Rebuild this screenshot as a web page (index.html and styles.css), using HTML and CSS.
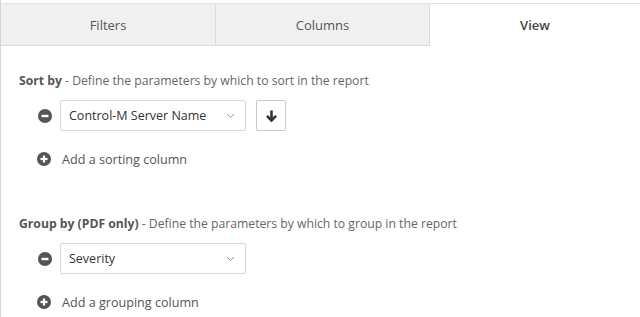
FILE: index.html
```html
<!DOCTYPE html>
<html>
<head>
<meta charset="utf-8">
<link rel="stylesheet" href="styles.css">
</head>
<body>
<div class="panel">
  <div class="tabs">
    <div class="tab">Filters</div>
    <div class="tab">Columns</div>
    <div class="tab active">View</div>
  </div>
  <div class="content">
    <section class="section">
      <p class="heading"><b>Sort by</b> - Define the parameters by which to sort in the report</p>
      <div class="row">
        <span class="circle-icon">
          <svg width="14" height="14" viewBox="0 0 14 14"><circle cx="7" cy="7" r="7" fill="#555"/><rect x="3.5" y="5.8" width="7" height="2.4" fill="#fff"/></svg>
        </span>
        <div class="select"><span>Control-M Server Name</span>
          <svg class="chev" width="9" height="6" viewBox="0 0 9 6"><path d="M1 1 L4.5 4.5 L8 1" fill="none" stroke="#999" stroke-width="1"/></svg>
        </div>
        <div class="btn">
          <svg width="11" height="12" viewBox="0 0 11 12"><path d="M5.5 0.5 V10" stroke="#333" stroke-width="2.6" fill="none"/><path d="M1 5.8 L5.5 10.5 L10 5.8" stroke="#333" stroke-width="2.6" fill="none" stroke-linejoin="miter"/></svg>
        </div>
      </div>
      <div class="add">
        <span class="circle-icon">
          <svg width="14" height="14" viewBox="0 0 14 14"><circle cx="7" cy="7" r="7" fill="#555"/><rect x="3.5" y="5.9" width="7" height="2.2" fill="#fff"/><rect x="5.9" y="3.5" width="2.2" height="7" fill="#fff"/></svg>
        </span>
        <span class="add-label">Add a sorting column</span>
      </div>
    </section>
    <section class="section group">
      <p class="heading"><b>Group by (PDF only)</b> - Define the parameters by which to group in the report</p>
      <div class="row">
        <span class="circle-icon">
          <svg width="14" height="14" viewBox="0 0 14 14"><circle cx="7" cy="7" r="7" fill="#555"/><rect x="3.5" y="5.8" width="7" height="2.4" fill="#fff"/></svg>
        </span>
        <div class="select"><span>Severity</span>
          <svg class="chev" width="9" height="6" viewBox="0 0 9 6"><path d="M1 1 L4.5 4.5 L8 1" fill="none" stroke="#999" stroke-width="1"/></svg>
        </div>
      </div>
      <div class="add">
        <span class="circle-icon">
          <svg width="14" height="14" viewBox="0 0 14 14"><circle cx="7" cy="7" r="7" fill="#555"/><rect x="3.5" y="5.9" width="7" height="2.2" fill="#fff"/><rect x="5.9" y="3.5" width="2.2" height="7" fill="#fff"/></svg>
        </span>
        <span class="add-label">Add a grouping column</span>
      </div>
    </section>
  </div>
</div>
</body>
</html>
```
FILE: styles.css
```css
html, body {
  margin: 0;
  padding: 0;
  background: #fff;
}
body {
  font-family: "Open Sans", "Noto Sans", sans-serif;
  color: #555;
}
.panel {
  border-left: 1px solid #d4d4d4;
  padding-top: 3px;
  height: 314px;
  overflow: hidden;
}
.tabs {
  display: flex;
  border-top: 1px solid #e2e2e2;
  height: 42px;
}
.tab {
  flex: 0 0 215px;
  box-sizing: border-box;
  display: flex;
  align-items: center;
  justify-content: center;
  background: #f0f0f0;
  border-right: 1px solid #dcdcdc;
  border-bottom: 1px solid #dcdcdc;
  font-size: 13px;
  color: #555;
}
.tab + .tab {
  flex-basis: 214px;
}
.tab.active {
  flex: 1 1 auto;
  background: #fff;
  border-right: none;
  border-bottom: none;
  font-weight: 600;
  color: #444;
}
.content {
  padding-left: 18px;
}
.section {
  padding-top: 27px;
}
.section.group {
  padding-top: 47px;
}
.heading {
  margin: 0;
  font-size: 12.2px;
  line-height: 16px;
  color: #666;
}
.heading b {
  font-weight: 700;
  color: #555;
}
.row {
  display: flex;
  align-items: center;
  margin-top: 11px;
  padding-left: 19px;
}
.circle-icon {
  display: flex;
  width: 14px;
  height: 14px;
}
.select {
  margin-left: 8px;
  width: 166px;
  height: 29px;
  border: 1px solid #d6d6d6;
  border-radius: 2px;
  display: flex;
  align-items: center;
  justify-content: space-between;
  padding: 0 10px 0 8px;
  font-size: 12.5px;
  color: #333;
}
.chev {
  display: block;
}
.btn {
  margin-left: 10px;
  width: 28px;
  height: 29px;
  border: 1px solid #c8c8c8;
  border-radius: 2px;
  display: flex;
  align-items: center;
  justify-content: center;
}
.add {
  display: flex;
  align-items: center;
  margin-top: 18px;
  padding-left: 18px;
  height: 20px;
}
.add-label {
  margin-left: 11px;
  font-size: 12.6px;
  color: #555;
}
```
